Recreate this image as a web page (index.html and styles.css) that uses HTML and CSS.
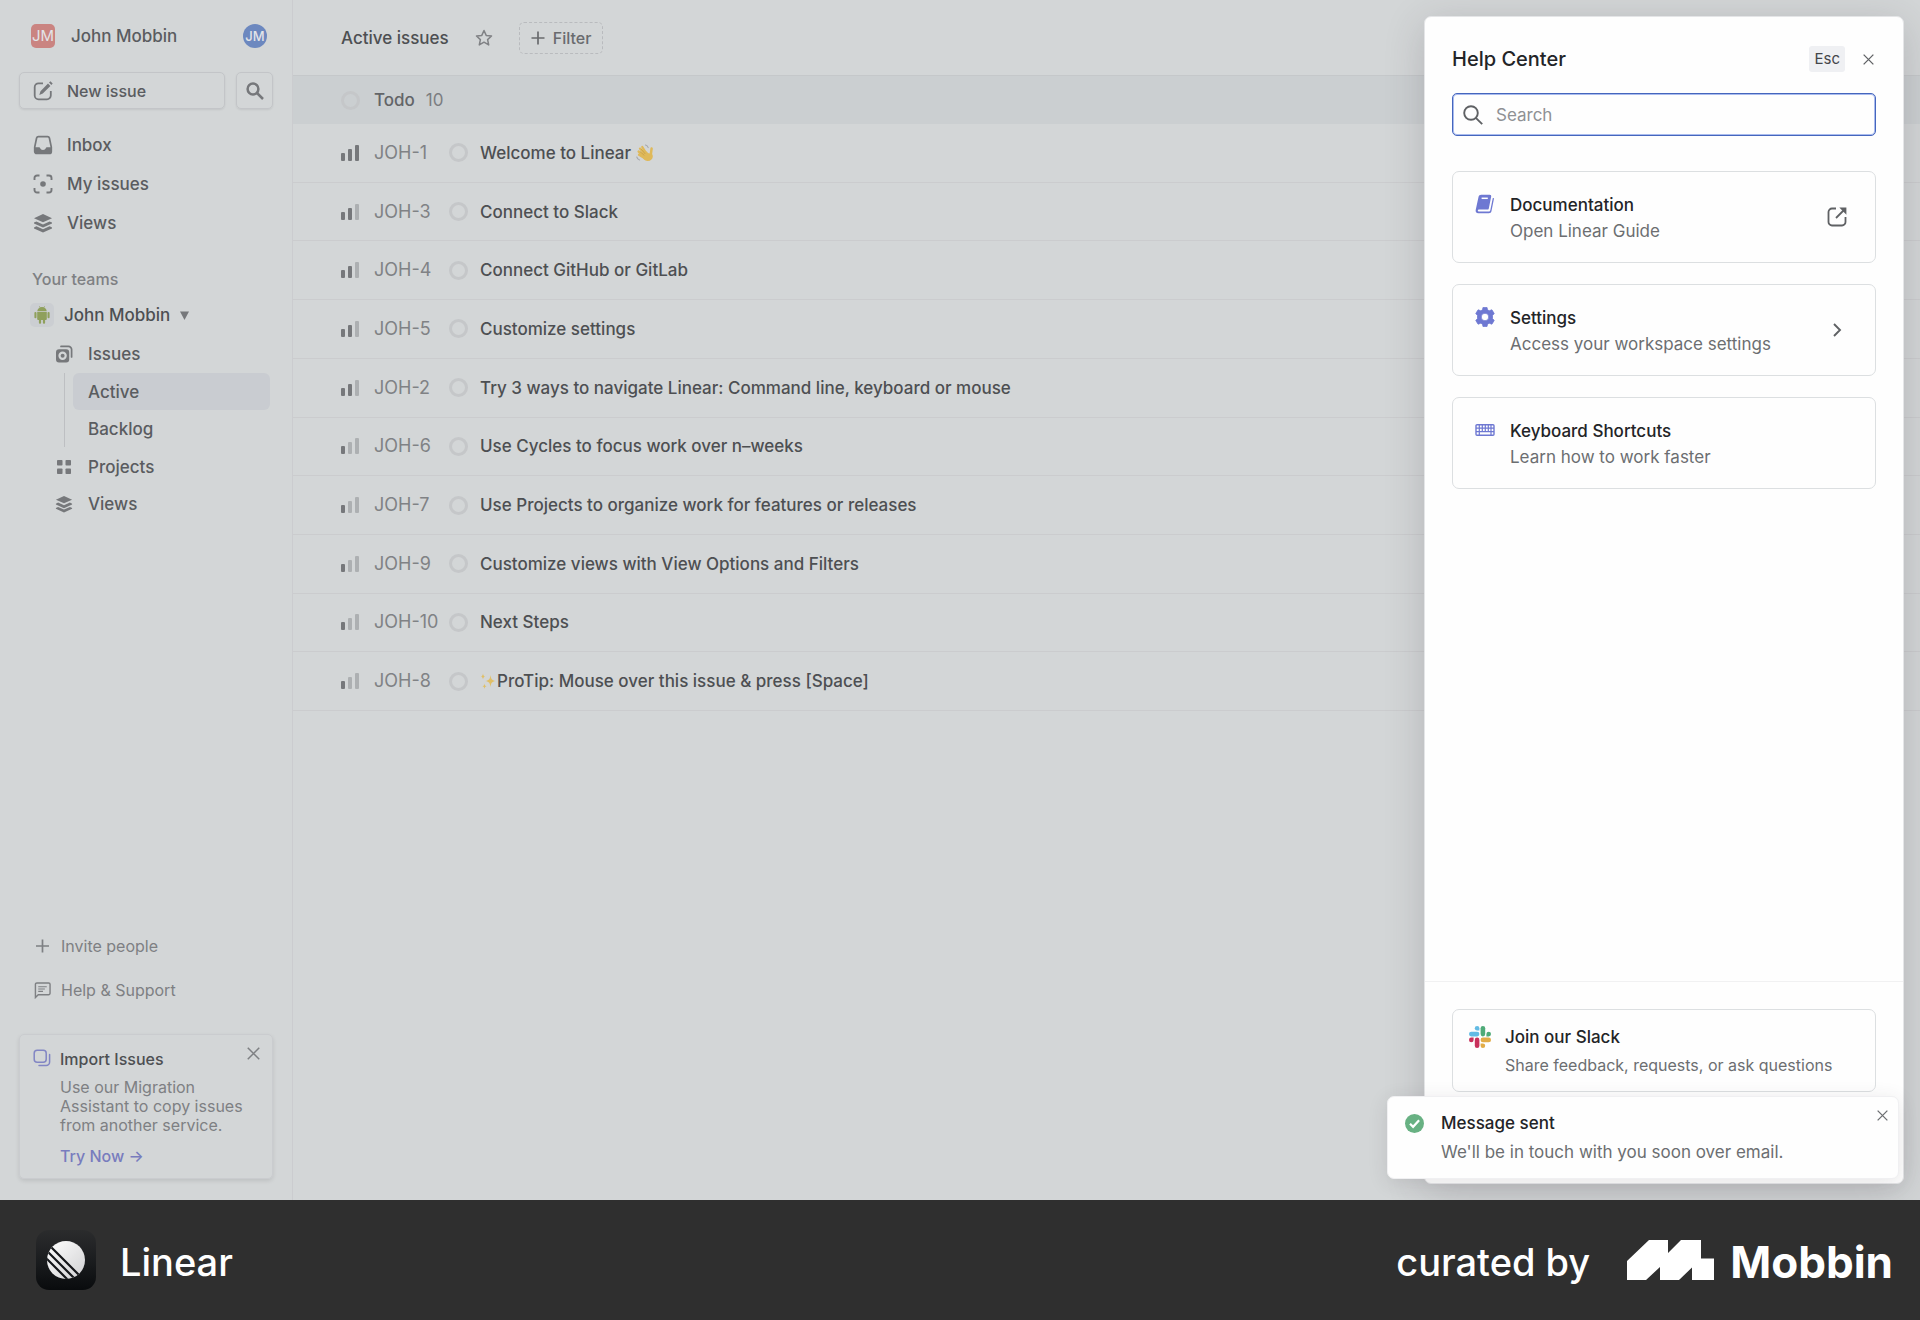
FILE: index.html
```html
<!DOCTYPE html>
<html lang="en">
<head>
    <meta charset="UTF-8">
    <meta name="viewport" content="width=device-width, initial-scale=1.0">
    <title>Active issues - Linear</title>
    <link rel="stylesheet" href="styles.css">
</head>
<body>
    <!-- shared icons -->
    <svg class="sprite" aria-hidden="true">
        <symbol id="i-plus" viewBox="0 0 14 14"><path d="M7 0.5v13M0.5 7h13" fill="none" stroke="currentColor" stroke-width="1.7"/></symbol>
        <symbol id="i-close" viewBox="0 0 12 12"><path d="M0.7 0.7l10.6 10.6M11.3 0.7L0.7 11.3" fill="none" stroke="currentColor" stroke-width="1.4"/></symbol>
        <symbol id="i-stack" viewBox="0 0 20 20">
            <path d="M10 1L19 5.2L10 9.2L1 5.2z" fill="currentColor"/>
            <path d="M1 9.600l2.400-1.200L10 11.400l6.600-3l2.400 1.200v1L10 14.600L1 10.600zM1 14.400l2.400-1.200L10 16.200l6.600-3l2.400 1.200v1L10 19.400L1 15.400z" fill="currentColor"/>
        </symbol>
        <symbol id="i-p3" viewBox="0 0 18 16"><rect x="0" y="8" width="4" height="8" rx="1"/><rect x="7" y="4" width="4" height="12" rx="1"/><rect x="14" y="0" width="4" height="16" rx="1"/></symbol>
        <symbol id="i-p2" viewBox="0 0 18 16"><rect x="0" y="8" width="4" height="8" rx="1"/><rect x="7" y="4" width="4" height="12" rx="1"/><rect x="14" y="0" width="4" height="16" rx="1" opacity=".4"/></symbol>
        <symbol id="i-p1" viewBox="0 0 18 16"><rect x="0" y="8" width="4" height="8" rx="1"/><rect x="7" y="4" width="4" height="12" rx="1" opacity=".4"/><rect x="14" y="0" width="4" height="16" rx="1" opacity=".4"/></symbol>
    </svg>

    <div class="app">
        <aside class="sidebar">
            <div class="workspace">
                <span class="workspace-logo">JM</span>
                <span class="workspace-name">John Mobbin</span>
                <span class="avatar">JM</span>
            </div>
            <div class="actions">
                <button class="new-issue" type="button">
                    <svg width="20" height="20" viewBox="0 0 20 20"><path d="M10 2.3H5.5A3.8 3.8 0 0 0 1.7 6v8.5a3.8 3.8 0 0 0 3.8 3.8H14a3.8 3.8 0 0 0 3.8-3.8V10" fill="none" stroke="currentColor" stroke-width="1.8"/><path d="M15 2.600l2.400 2.400L9.800 12.600L6.300 14l1.200-3.700zM16 1.600l1.400-1.300l2.300 2.200l-1.400 1.500z" fill="currentColor"/></svg>
                    New issue
                </button>
                <button class="search-btn" type="button" aria-label="Search issues">
                    <svg width="18" height="18" viewBox="0 0 18 18" fill="none" stroke="currentColor" stroke-width="2.500"><circle cx="7" cy="7" r="5.400"/><path d="M11 11l6 6"/></svg>
                </button>
            </div>
            <nav class="nav">
                <a href="#inbox">
                    <svg width="20" height="20" viewBox="0 0 20 20"><path d="M5.500 1.600h9a1.900 1.900 0 0 1 1.900 1.400L18.300 12v4.500a2 2 0 0 1-2 2H3.700a2 2 0 0 1-2-2V12L3.600 3a1.900 1.900 0 0 1 1.900-1.400z" fill="none" stroke="currentColor" stroke-width="1.700"/><path d="M1.500 12.200h4.700c.5 0 .7.300.9.800c.4 1.200 1.500 2 2.900 2s2.500-.8 2.900-2c.2-.5.4-.8.900-.8h4.700V17a2 2 0 0 1-2 2h-13a2 2 0 0 1-2-2z" fill="currentColor"/></svg>
                    Inbox
                </a>
                <a href="#my-issues">
                    <svg width="20" height="20" viewBox="0 0 20 20"><path d="M1.500 6V4A2.500 2.500 0 0 1 4 1.500h2.500M13.500 1.500H16A2.500 2.500 0 0 1 18.500 4v2M18.500 14v2a2.500 2.500 0 0 1-2.500 2.500h-2.500M6.500 18.500H4A2.500 2.500 0 0 1 1.500 16v-2" fill="none" stroke="currentColor" stroke-width="1.900"/><circle cx="10" cy="10" r="2.800" fill="currentColor"/></svg>
                    My issues
                </a>
                <a href="#views"><svg width="20" height="20"><use href="#i-stack"/></svg>Views</a>
            </nav>

            <h2 class="teams-label">Your teams</h2>
            <button class="team" type="button">
                <span class="team-icon">
                    <svg width="16" height="18" viewBox="0 0 16 18" fill="#8fa05c"><path d="M3.200 5.200a4.800 4.800 0 0 1 2.600-3.800L5.100.3l.4-.2l.8 1.100a5 5 0 0 1 3.400 0L10.500.1l.4.200l-.7 1.100a4.800 4.800 0 0 1 2.600 3.800z"/><path d="M3.200 6h9.600v6.900a1 1 0 0 1-1 1H4.200a1 1 0 0 1-1-1z"/><rect x=".4" y="6" width="2.100" height="6.200" rx="1"/><rect x="13.500" y="6" width="2.100" height="6.200" rx="1"/><rect x="4.900" y="12" width="2.200" height="5.800" rx="1"/><rect x="8.900" y="12" width="2.200" height="5.800" rx="1"/></svg>
                </span>
                John Mobbin
                <svg class="caret" width="9" height="9" viewBox="0 0 9 9"><path d="M0 .5h9L4.500 9z" fill="currentColor"/></svg>
            </button>
            <nav class="team-nav">
                <a href="#issues">
                    <svg width="18" height="18" viewBox="0 0 18 18"><path d="M6 1.400h7.500A3.100 3.100 0 0 1 16.600 4.500V12" fill="none" stroke="currentColor" stroke-width="1.700" stroke-linecap="round"/><path fill-rule="evenodd" d="M4 4.200h7.200a3 3 0 0 1 3 3v7.200a3 3 0 0 1-3 3H4a3 3 0 0 1-3-3V7.200a3 3 0 0 1 3-3zM7.600 6.600a4.200 4.200 0 1 0 0 8.400a4.200 4.200 0 0 0 0-8.400z" fill="currentColor"/><circle cx="7.600" cy="10.800" r="2" fill="currentColor"/></svg>
                    Issues
                </a>
                <div class="sub-nav">
                    <a class="active" href="#active">Active</a>
                    <a href="#backlog">Backlog</a>
                </div>
                <a href="#projects">
                    <svg width="18" height="18" viewBox="0 0 18 18" fill="currentColor"><rect x="2" y="2" width="5.500" height="5.500" rx=".8"/><rect x="10.500" y="2" width="5.500" height="5.500" rx=".8"/><rect x="2" y="10.500" width="5.500" height="5.500" rx=".8"/><rect x="10.500" y="10.500" width="5.500" height="5.500" rx=".8"/></svg>
                    Projects
                </a>
                <a href="#team-views"><svg width="18" height="18"><use href="#i-stack"/></svg>Views</a>
            </nav>

            <div class="sidebar-bottom">
                <button class="link-row" type="button"><svg width="14" height="14"><use href="#i-plus"/></svg>Invite people</button>
                <button class="link-row" type="button">
                    <svg width="18" height="18" viewBox="0 0 18 18" fill="none" stroke="currentColor" stroke-width="1.500"><path d="M1.500 17V3a1.500 1.500 0 0 1 1.500-1.500h12.500A1.500 1.500 0 0 1 17 3v9.500a1.500 1.500 0 0 1-1.500 1.500H4.500z"/><path d="M4.500 5.500h9M4.500 8h7M4.500 10.500h5" stroke-width="1.200"/></svg>
                    Help &amp; Support
                </button>
                <section class="import-card">
                    <svg width="18" height="18" viewBox="0 0 18 18" fill="none" stroke="#8286c4" stroke-width="1.500"><rect x="1.200" y="1.200" width="12" height="12" rx="3"/><path d="M16.600 5.500v7.600a3.500 3.500 0 0 1-3.500 3.500H6" stroke-linecap="round"/></svg>
                    <div>
                        <h3>Import Issues</h3>
                        <p>Use our Migration Assistant to copy issues from another service.</p>
                        <a href="#import">Try Now →</a>
                    </div>
                    <button class="icon-btn card-close" type="button" aria-label="Dismiss"><svg width="13" height="13"><use href="#i-close"/></svg></button>
                </section>
            </div>
        </aside>

        <main class="main">
            <header class="topbar">
                <h1>Active issues</h1>
                <button class="icon-btn star" type="button" aria-label="Favorite"><svg width="18" height="18" viewBox="0 0 18 18" fill="none" stroke="currentColor" stroke-width="1.500" stroke-linejoin="round"><path d="M9 1.500l2.200 4.900l5.300.600l-3.900 3.600l1.100 5.300L9 13.200l-4.700 2.700l1.100-5.300L1.500 7l5.300-.600z"/></svg></button>
                <button class="filter" type="button"><svg width="14" height="14"><use href="#i-plus"/></svg>Filter</button>
            </header>
            <div class="group">
                <span class="status"></span>
                <h2>Todo</h2>
                <span class="count">10</span>
            </div>
            <ul class="issues">
                <li><svg class="priority"><use href="#i-p3"/></svg><span class="id">JOH-1</span><span class="status"></span><a href="#joh-1">Welcome to Linear
                    <svg class="emoji" width="18" height="18" viewBox="0 0 18 18" role="img" aria-label="waving hand"><g fill="none" stroke="#dfb95a" stroke-width="2.300" stroke-linecap="round"><path d="M10 9L6.300 3M9.500 11L4 4.600M8.500 12.500L2.600 7.500M8.500 14L3 10.800"/><path d="M14.800 10.500L15.600 4.600" stroke-width="2.500"/></g><path d="M10.500 7.300c1.300 1.900 2 2 2.900 2.200c2.300-.3 3.700 1 3.400 3.200c-.3 2.700-2.700 4.700-5.500 4.300c-2.600-.3-4.500-2.400-5.300-4.500z" fill="#dfb95a"/><path d="M5.300 5.200l4 4.800M4 7.500l4.400 4" fill="none" stroke="#b98f3e" stroke-width=".5"/><path d="M9.500 1c1.200.4 2.200 1.300 2.700 2.600M.8 13c.4 1.500 1.300 2.500 2.800 3" fill="none" stroke="#a6a8ad" stroke-width="1.100" stroke-linecap="round"/></svg></a></li>
                <li><svg class="priority"><use href="#i-p2"/></svg><span class="id">JOH-3</span><span class="status"></span><a href="#joh-3">Connect to Slack</a></li>
                <li><svg class="priority"><use href="#i-p2"/></svg><span class="id">JOH-4</span><span class="status"></span><a href="#joh-4">Connect GitHub or GitLab</a></li>
                <li><svg class="priority"><use href="#i-p2"/></svg><span class="id">JOH-5</span><span class="status"></span><a href="#joh-5">Customize settings</a></li>
                <li><svg class="priority"><use href="#i-p2"/></svg><span class="id">JOH-2</span><span class="status"></span><a href="#joh-2">Try 3 ways to navigate Linear: Command line, keyboard or mouse</a></li>
                <li><svg class="priority"><use href="#i-p1"/></svg><span class="id">JOH-6</span><span class="status"></span><a href="#joh-6">Use Cycles to focus work over n–weeks</a></li>
                <li><svg class="priority"><use href="#i-p1"/></svg><span class="id">JOH-7</span><span class="status"></span><a href="#joh-7">Use Projects to organize work for features or releases</a></li>
                <li><svg class="priority"><use href="#i-p1"/></svg><span class="id">JOH-9</span><span class="status"></span><a href="#joh-9">Customize views with View Options and Filters</a></li>
                <li><svg class="priority"><use href="#i-p1"/></svg><span class="id">JOH-10</span><span class="status"></span><a href="#joh-10">Next Steps</a></li>
                <li><svg class="priority"><use href="#i-p1"/></svg><span class="id">JOH-8</span><span class="status"></span><a href="#joh-8"><svg class="emoji" width="17" height="18" viewBox="0 0 17 18" role="img" aria-label="sparkles"><path d="M10.500 3c.5 4 1.300 5.200 5 6c-3.700.8-4.500 2-5 6c-.5-4-1.300-5.200-5-6c3.700-.8 4.500-2 5-6zM3 1.500c.3 2 .7 2.600 2.200 3C3.700 4.900 3.300 5.500 3 7.500c-.3-2-.7-2.600-2.200-3C2.300 4.100 2.700 3.500 3 1.500zM4.500 11.500c.3 2 .7 2.400 2.200 2.800c-1.500.4-1.900.9-2.200 2.800c-.3-1.900-.7-2.400-2.200-2.800c1.500-.4 1.900-.8 2.200-2.800z" fill="#e0bf66"/></svg>ProTip: Mouse over this issue &amp; press [Space]</a></li>
            </ul>
        </main>

        <aside class="help-panel">
            <div class="help-body">
                <div class="help-head">
                    <h2>Help Center</h2>
                    <kbd>Esc</kbd>
                    <button class="icon-btn" type="button" aria-label="Close help"><svg width="11" height="11"><use href="#i-close"/></svg></button>
                </div>
                <label class="search">
                    <svg width="20" height="20" viewBox="0 0 20 20" fill="none" stroke="#5f6164" stroke-width="1.900"><circle cx="8" cy="8" r="6.800"/><path d="M12.800 12.800l6.400 6.400"/></svg>
                    <input type="text" placeholder="Search" aria-label="Search help">
                </label>
                <a class="help-card" href="#docs">
                    <svg width="20" height="20" viewBox="0 0 20 20"><path d="M6.200.8h8.500a1.500 1.500 0 0 1 1.500 1.800l-2.400 11.800a1.500 1.500 0 0 1-1.500 1.200H3.900c-1.300 0-1.600 2 0 2h9.700c1 0 1.500-.4 1.700-1.300L17.800 4c.8-.3 1.300.1 1.100 1l-2.400 12c-.3 1.500-1.200 2.200-2.600 2.200H3.300C1.300 19.200.3 17.800.7 16L3.500 2.900C3.800 1.500 4.800.8 6.200.8z" fill="#6e78d2"/><path d="M6.600 4.300h6.200" stroke="#fff" stroke-width="1.500"/></svg>
                    <div>
                        <h3>Documentation</h3>
                        <p>Open Linear Guide</p>
                    </div>
                    <svg class="end" width="20" height="20" viewBox="0 0 20 20"><path d="M9 1.500H5A3.500 3.500 0 0 0 1.500 5v10A3.500 3.500 0 0 0 5 18.500h10a3.500 3.500 0 0 0 3.500-3.500v-5" fill="none" stroke="#5f6164" stroke-width="1.800"/><path d="M9 11l8-8" stroke="#5f6164" stroke-width="1.800"/><path d="M12.300.600h7.100v7.100z" fill="#5f6164"/></svg>
                </a>
                <a class="help-card" href="#settings">
                    <svg width="20" height="20" viewBox="0 0 20 20"><path fill-rule="evenodd" fill="#6e78d2" stroke="#6e78d2" stroke-width=".8" stroke-linejoin="round" d="M8 .4h4l.5 2.400l1.700 1L16.900 2.800l2.300 3.700l-1.700 2v3l1.700 2l-2.300 3.700l-2.700-1l-1.700 1L12 19.600H8l-.5-2.400l-1.700-1l-2.700 1L.8 13.500l1.700-2v-3l-1.700-2L3.100 2.800l2.700 1l1.700-1zM10 6.200a3.800 3.800 0 1 0 0 7.600a3.800 3.800 0 0 0 0-7.600z"/></svg>
                    <div>
                        <h3>Settings</h3>
                        <p>Access your workspace settings</p>
                    </div>
                    <svg class="end" width="20" height="20" viewBox="0 0 20 20"><path d="M7 4l6 6l-6 6" fill="none" stroke="#5f6164" stroke-width="1.900"/></svg>
                </a>
                <a class="help-card" href="#shortcuts">
                    <svg width="20" height="20" viewBox="0 0 20 20" fill="none" stroke="#6e78d2"><rect x="1" y="4.700" width="18" height="10.600" rx="1" stroke-width="1.400"/><path d="M1 8.200h18M1 11.700h18M4.300 5v10M7.300 5v6.700M10.300 5v6.700M13.300 5v6.700M16 5v10" stroke-width="1.200"/></svg>
                    <div>
                        <h3>Keyboard Shortcuts</h3>
                        <p>Learn how to work faster</p>
                    </div>
                </a>
            </div>
            <div class="help-foot">
                <a class="slack-card" href="#slack">
                    <svg width="22" height="22" viewBox="0 0 22 22"><g fill="#63bbe4"><path d="M8.100 0a2.300 2.300 0 0 1 2.300 2.300v2.300H8.100a2.300 2.300 0 0 1 0-4.600z"/><rect x="0" y="5.800" width="10.400" height="4.600" rx="2.300"/></g><g fill="#4fab78"><rect x="11.600" y="0" width="4.600" height="10.400" rx="2.300"/><path d="M22 8.100a2.300 2.300 0 0 1-2.300 2.300h-2.300V8.100a2.300 2.300 0 0 1 4.600 0z"/></g><g fill="#e2ac47"><rect x="11.600" y="11.600" width="10.400" height="4.600" rx="2.300"/><path d="M13.900 22a2.300 2.300 0 0 1-2.300-2.300v-2.300h2.300a2.300 2.300 0 0 1 0 4.600z"/></g><g fill="#c9315c"><rect x="5.800" y="11.600" width="4.600" height="10.400" rx="2.300"/><path d="M0 13.900a2.300 2.300 0 0 1 2.300-2.300h2.300v2.300a2.300 2.300 0 0 1-4.600 0z"/></g></svg>
                    <div>
                        <h3>Join our Slack</h3>
                        <p>Share feedback, requests, or ask questions</p>
                    </div>
                </a>
            </div>
        </aside>

        <div class="toast" role="status">
            <svg width="19" height="19" viewBox="0 0 19 19"><circle cx="9.500" cy="9.500" r="9.500" fill="#68b183"/><path d="M5 9.700l3.100 3.100l6-6.500" fill="none" stroke="#fff" stroke-width="2.200"/></svg>
            <div>
                <h3>Message sent</h3>
                <p>We'll be in touch with you soon over email.</p>
            </div>
            <button class="icon-btn toast-close" type="button" aria-label="Close message"><svg width="11" height="11"><use href="#i-close"/></svg></button>
        </div>
    </div>

    <footer class="credit">
        <svg width="60" height="60" viewBox="0 0 60 60">
            <defs>
                <linearGradient id="tile" x1="0" y1="0" x2="0" y2="1"><stop offset="0" stop-color="#2b2c2d"/><stop offset=".5" stop-color="#1b1d1f"/><stop offset="1" stop-color="#090b0d"/></linearGradient>
                <linearGradient id="moon" x1="0" y1="0" x2="1" y2="1"><stop offset="0" stop-color="#fff"/><stop offset="1" stop-color="#d0d0d2"/></linearGradient>
                <clipPath id="disc"><circle cx="30" cy="30" r="19"/></clipPath>
            </defs>
            <rect width="60" height="60" rx="13" fill="url(#tile)"/>
            <g clip-path="url(#disc)">
                <rect x="11" y="11" width="38" height="38" fill="url(#moon)"/>
                <path d="M12 14l34 34M8 18l34 34M4 22l34 34" stroke="#15171a" stroke-width="2.200"/>
            </g>
        </svg>
        <span class="app-name">Linear</span>
        <span class="curated">curated by</span>
        <svg width="87" height="40" viewBox="0 0 87 40"><path d="M0 21L22 0h19v13L54 0h20v18.500h13V40H65V27.500L52 40H33V27L19 40H0z" fill="#fff"/></svg>
        <span class="brand">Mobbin</span>
    </footer>
</body>
</html>
```
FILE: styles.css
```css
* {
    margin: 0;
    padding: 0;
    box-sizing: border-box;
}
body {
    font-family: 'Inter', 'Liberation Sans', sans-serif;
    font-size: 17px;
    line-height: 26px;
    color: #4d4f52;
    background: #2f2f2f;
    min-height: 100vh;
    display: flex;
    flex-direction: column;
}
h1, h2, h3 {
    font-size: 17px;
    font-weight: 500;
}
a {
    color: inherit;
    text-decoration: none;
}
button {
    font: inherit;
    color: inherit;
    background: none;
    border: none;
    cursor: pointer;
}
svg {
    flex-shrink: 0;
}
.sprite {
    position: absolute;
    width: 0;
    height: 0;
}
.icon-btn {
    display: flex;
    align-items: center;
    justify-content: center;
}
.app {
    position: relative;
    flex: 1;
    display: flex;
    background: #d3d6d7;
    overflow: hidden;
}

/* sidebar */
.sidebar {
    width: 293px;
    flex-shrink: 0;
    display: flex;
    flex-direction: column;
    padding: 23px 19px 21px;
    border-right: 1px solid #cbcccf;
    font-weight: 500;
    color: #5a5c60;
}
.workspace {
    display: flex;
    align-items: center;
    padding: 0 6px 0 12px;
}
.workspace-logo,
.avatar {
    width: 24px;
    height: 24px;
    line-height: 24px;
    text-align: center;
    font-size: 13px;
    color: #e3e4e8;
}
.workspace-logo {
    font-size: 15px;
    font-weight: 400;
    border-radius: 5px;
    background: #ca8481;
}
.avatar {
    border-radius: 50%;
    background: #6c88bf;
}
.workspace-name {
    flex: 1;
    margin-left: 16px;
}
.actions {
    display: flex;
    gap: 11px;
    margin-top: 23px;
}
.new-issue,
.search-btn {
    height: 37px;
    display: flex;
    align-items: center;
    border: 1px solid #c3c5c8;
    border-radius: 5px;
    box-shadow: 0 1px 2px rgba(0, 0, 0, 0.08);
}
.new-issue {
    flex: 1;
    gap: 14px;
    padding-left: 13px;
    font-size: 16px;
}
.new-issue svg,
.search-btn svg,
.nav svg,
.team-nav svg,
.caret {
    color: #76787b;
}
.search-btn {
    width: 37px;
    justify-content: center;
}
.nav {
    margin-top: 16px;
}
.nav a {
    height: 39px;
    display: flex;
    align-items: center;
    gap: 14px;
    padding-left: 14px;
}
.teams-label {
    margin: 24px 0 8px 13px;
    font-size: 16px;
    color: #7e8083;
}
.team {
    display: flex;
    align-items: center;
    gap: 10px;
    height: 30px;
    margin-bottom: 5px;
    padding-left: 11px;
    color: #4d4f52;
}
.team-icon {
    width: 24px;
    height: 24px;
    display: flex;
    align-items: center;
    justify-content: center;
    border-radius: 5px;
    background: #cbced2;
}
.team-nav a {
    height: 37px;
    display: flex;
    align-items: center;
    gap: 15px;
    padding-left: 36px;
}
.sub-nav {
    margin: 1px 3px 1px 45px;
    padding-left: 8px;
    border-left: 1px solid #bdbfc2;
}
.sub-nav a {
    padding-left: 15px;
    border-radius: 6px;
}
.sub-nav .active {
    background: #c9ccd1;
}
.sidebar-bottom {
    margin-top: auto;
    color: #7e8083;
    font-size: 16px;
    font-weight: 400;
}
.link-row {
    width: 100%;
    height: 44px;
    display: flex;
    align-items: center;
    gap: 10px;
    padding-left: 15px;
}
.link-row svg {
    width: 17px;
}
.import-card {
    display: flex;
    align-items: flex-start;
    gap: 9px;
    margin-top: 22px;
    padding: 11px 12px 9px 13px;
    border: 1px solid #cacccf;
    border-radius: 5px;
    box-shadow: 0 2px 4px rgba(0, 0, 0, 0.1);
    line-height: 19px;
}
.import-card > svg {
    margin-top: 3px;
}
.import-card > div {
    flex: 1;
}
.import-card h3 {
    font-size: 16px;
    line-height: 26px;
    color: #4d4f52;
}
.import-card p {
    margin: 6px 0 8px;
}
.import-card a {
    line-height: 26px;
    font-weight: 500;
    color: #787cbe;
}
.card-close {
    margin: 1px 0 0 -22px;
}

/* issue list */
.main {
    flex: 1;
    min-width: 0;
}
.topbar {
    height: 75px;
    display: flex;
    align-items: center;
    padding-left: 48px;
}
.star {
    margin: 0 26px;
    color: #808285;
}
.filter {
    height: 32px;
    display: flex;
    align-items: center;
    gap: 8px;
    padding: 0 11px;
    border: 1px dashed #b9bbbe;
    border-radius: 5px;
    font-size: 16px;
    font-weight: 500;
    color: #696b6e;
}
.group {
    height: 49px;
    display: flex;
    align-items: center;
    padding-left: 48px;
    background: #cbcfd1;
    border-top: 1px solid #c5c8ca;
}
.group h2 {
    margin: 0 11px 0 14px;
    color: #636568;
}
.count {
    color: #7c7e81;
}
.status {
    width: 19px;
    height: 19px;
    border: 3px solid #c5c7c9;
    border-radius: 50%;
}
.issues {
    height: 587px;
    display: grid;
    grid-auto-rows: 1fr;
    list-style: none;
}
.issues li {
    display: flex;
    align-items: center;
    padding-left: 48px;
    border-bottom: 1px solid #cbccce;
}
.priority {
    width: 18px;
    height: 16px;
    margin-right: 15px;
    fill: #76787b;
}
.id {
    width: 75px;
    font-size: 18px;
    color: #808285;
}
.issues a {
    margin-left: 12px;
    font-weight: 500;
}
.emoji {
    vertical-align: -3px;
}

/* help center */
.help-panel {
    position: absolute;
    top: 16px;
    right: 16px;
    bottom: 16px;
    width: 480px;
    display: flex;
    flex-direction: column;
    justify-content: space-between;
    background: #fefefe;
    border: 1px solid #e4e5e7;
    border-radius: 7px;
    box-shadow: 0 8px 40px rgba(60, 50, 60, 0.2);
}
.help-body {
    padding: 29px 27px;
}
.help-head {
    display: flex;
    align-items: center;
    margin-bottom: 21px;
}
.help-head h2 {
    flex: 1;
    font-size: 20px;
    color: #232427;
}
kbd {
    padding: 0 5px;
    border-radius: 3px;
    background: #eff0f3;
    font-family: inherit;
    font-size: 15px;
    color: #44464a;
}
.help-head .icon-btn {
    margin: 0 2px 0 18px;
    color: #5f6164;
}
.search {
    height: 43px;
    display: flex;
    align-items: center;
    gap: 13px;
    margin-bottom: 35px;
    padding: 0 10px;
    border: 1px solid #4666bd;
    border-radius: 5px;
    box-shadow: inset 0 0 0 1px #a9bbee;
}
.search input {
    flex: 1;
    border: none;
    outline: none;
    background: none;
    font: inherit;
    color: #232427;
}
.search input::placeholder {
    color: #8f9194;
}
.help-card,
.slack-card {
    display: flex;
    align-items: flex-start;
    border: 1px solid #dcdfe1;
    border-radius: 7px;
    color: #6c6e71;
}
.help-card {
    height: 92px;
    gap: 15px;
    margin-bottom: 21px;
    padding: 20px 28px 0 22px;
}
.help-card > svg {
    margin-top: 2px;
}
.help-card > div {
    flex: 1;
}
.help-card .end {
    margin-top: 15px;
}
.help-card h3,
.slack-card h3,
.toast h3 {
    color: #232427;
}
.help-foot {
    padding: 27px;
    height: 202px;
    border-top: 1px solid #f1f1f2;
}
.slack-card {
    gap: 14px;
    padding: 14px 16px 13px;
}
.slack-card > svg {
    margin-top: 2px;
}
.slack-card p {
    margin-top: 2px;
    font-size: 16px;
}

.toast {
    position: absolute;
    right: 21px;
    bottom: 21px;
    width: 512px;
    display: flex;
    align-items: flex-start;
    gap: 17px;
    padding: 13px 10px 13px 17px;
    background: #fefefe;
    border: 1px solid #f0f0f2;
    border-radius: 7px;
    box-shadow: 0 4px 20px rgba(60, 50, 60, 0.12);
    color: #6c6e71;
}
.toast > svg {
    margin-top: 4px;
}
.toast > div {
    flex: 1;
}
.toast p {
    margin-top: 3px;
}

/* bottom bar */
.credit {
    height: 120px;
    display: flex;
    align-items: center;
    padding: 0 27px 0 36px;
    background: #2f2f2f;
    color: #fff;
    font-size: 38px;
    font-weight: 500;
    line-height: 60px;
}
.credit span {
    padding-top: 4px;
}
.app-name {
    flex: 1;
    margin-left: 24px;
}
.curated {
    margin-right: 37px;
}
.brand {
    margin-left: 16px;
    font-size: 44px;
    font-weight: 700;
}
```
